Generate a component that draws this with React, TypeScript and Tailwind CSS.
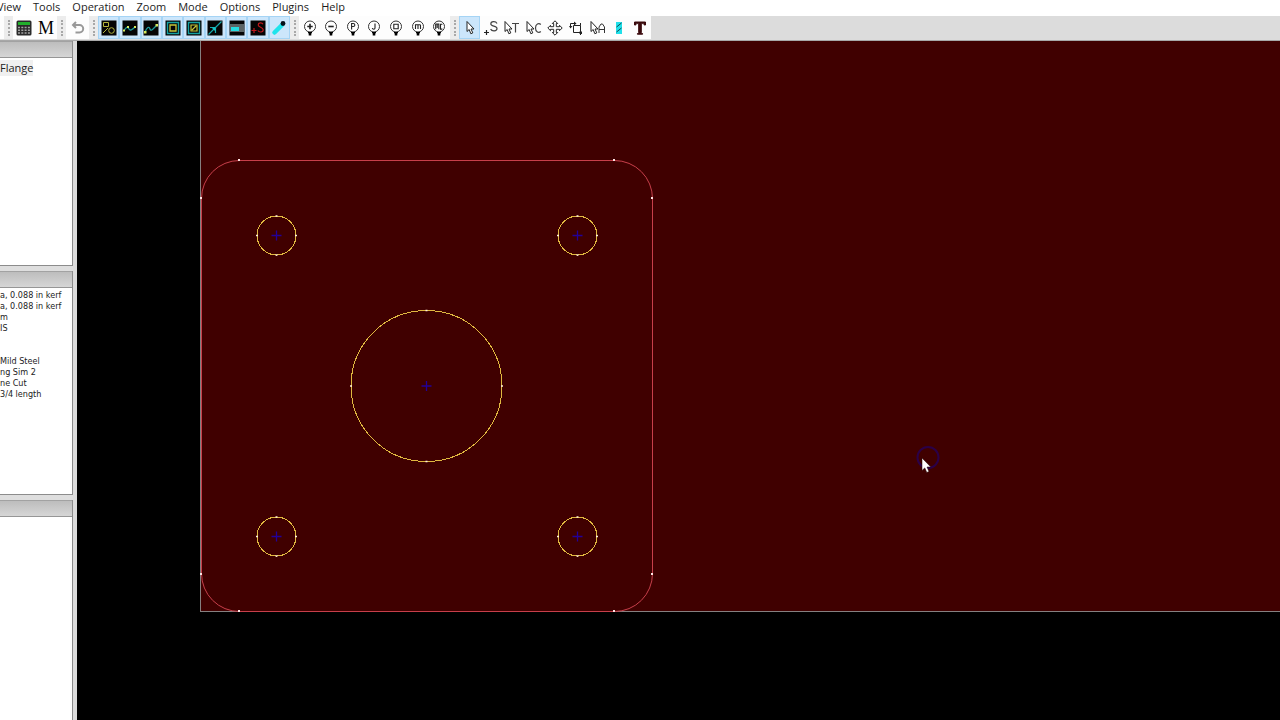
import type { ReactNode } from "react";
import { clsx } from "clsx";

interface Tool {
  label: string;
  icon: ReactNode;
  active?: boolean;
}

const menus = [
  "View",
  "Tools",
  "Operation",
  "Zoom",
  "Mode",
  "Options",
  "Plugins",
  "Help",
];

const settings = [
  "a, 0.088 in kerf",
  "a, 0.088 in kerf",
  "m",
  "IS",
  "",
  "",
  "Mild Steel",
  "ng Sim 2",
  "ne Cut",
  "3/4 length",
];

const holes = [
  { x: 199.5, y: 194.5, r: 19.5 },
  { x: 500.5, y: 194.5, r: 19.5 },
  { x: 349.5, y: 345, r: 75.5 },
  { x: 199.5, y: 495.5, r: 19.5 },
  { x: 500.5, y: 495.5, r: 19.5 },
];

const corners = [
  [162, 119],
  [537, 119],
  [124, 157],
  [575, 157],
  [124, 533],
  [575, 533],
  [162, 570],
  [537, 570],
];

function Icon({ children }: { children: ReactNode }) {
  return (
    <svg width="16" height="16" viewBox="0 0 16 16" fill="none" aria-hidden="true">
      {children}
    </svg>
  );
}

function DarkIcon({ children }: { children: ReactNode }) {
  return (
    <Icon>
      <rect x="0.5" y="0.5" width="15" height="15" fill="#050505" />
      {children}
    </Icon>
  );
}

function ZoomIcon({ children }: { children: ReactNode }) {
  return (
    <Icon>
      <circle cx="8" cy="6.5" r="5.5" fill="#fff" stroke="#333" />
      <path d="M6 12h4v1.2H9.3v2.3H6.7v-2.3H6z" fill="#000" />
      <g stroke="#222" strokeWidth="1.1">
        {children}
      </g>
    </Icon>
  );
}

const arrow = "M1 1.5v10l2.2-2 1.6 4.2 2-.8L5 9h3z";

const fileTools: Tool[] = [
  {
    label: "Calculator",
    icon: (
      <Icon>
        <rect x="0.5" y="0.5" width="15" height="15" rx="1.5" fill="#2a2a2a" />
        <rect x="2" y="2" width="12" height="3" fill="#22b02c" />
        <path
          d="M2 7.5h12M2 10.2h12M2 12.9h12"
          stroke="#a3a3a3"
          strokeWidth="1.5"
          strokeDasharray="2 1.3"
        />
      </Icon>
    ),
  },
  {
    label: "Machine",
    icon: (
      <span className="font-['Liberation_Serif',serif] text-[18px] leading-4 text-black">
        M
      </span>
    ),
  },
];

const undoTools: Tool[] = [
  {
    label: "Undo",
    icon: (
      <Icon>
        <path
          d="M3 5h6.5a3.7 3.7 0 0 1 0 7.400H5.500M6 2 3 5l3 3"
          stroke="#999"
          strokeWidth="2"
        />
      </Icon>
    ),
  },
];

const viewTools: Tool[] = [
  {
    label: "Show shapes",
    icon: (
      <DarkIcon>
        <path d="M2.5 2.5h5v4h-5zM2 13l5-5" stroke="#b5b53c" />
        <circle cx="10.5" cy="10.5" r="2.8" stroke="#b5b53c" />
      </DarkIcon>
    ),
  },
  {
    label: "Show path",
    icon: (
      <DarkIcon>
        <path d="M2 11c2-5 4-4 5-2s3 1 6-2" stroke="#1d9c9c" strokeWidth="1.3" />
        <path d="M1 9.5h2v2H1zM5 6h2v2H5zM12 6h2v2h-2z" fill="#d8e85c" />
      </DarkIcon>
    ),
  },
  {
    label: "Show ends",
    icon: (
      <DarkIcon>
        <path d="M2 12c2-5 4-6 5-3s3 0 7-4" stroke="#1d9c9c" strokeWidth="1.3" />
        <path d="M1 11h2.5v2.5H1zM12.5 4H15v2.5h-2.5z" fill="#d8e85c" />
      </DarkIcon>
    ),
  },
  {
    label: "Show offset",
    icon: (
      <DarkIcon>
        <path d="M2.500 2.500h11v11h-11z" stroke="#14a0a0" strokeWidth="1.4" />
        <path d="M5 5h6v6H5z" stroke="#c6c63a" strokeWidth="1.3" />
      </DarkIcon>
    ),
  },
  {
    label: "Show lead",
    icon: (
      <DarkIcon>
        <path d="M2.5 2.5h11v11h-11z" stroke="#14a0a0" strokeWidth="1.4" />
        <path d="M5 5h6v6H5zM6 10l4-4" stroke="#c6c63a" strokeWidth="1.2" />
      </DarkIcon>
    ),
  },
  {
    label: "Show direction",
    icon: (
      <DarkIcon>
        <path d="m1.5 14.500 13-13M3 7.500h5.500V13" stroke="#16a9ac" strokeWidth="1.2" />
        <path d="M4.500 7.500h4v4z" fill="#16c4c8" />
      </DarkIcon>
    ),
  },
  {
    label: "Show sheet",
    icon: (
      <DarkIcon>
        <path d="M1 4h14v8H1z" fill="#5c6464" />
        <path d="M2 7h8v4H2z" fill="#24dce0" />
      </DarkIcon>
    ),
  },
  {
    label: "Show start",
    icon: (
      <DarkIcon>
        <path d="M1.5 10.5h5M4 8v5" stroke="#c3181c" strokeWidth="1.2" />
        <path
          d="M13 4.2C12 2.3 8.2 2.4 8.2 5c0 2.6 5 1.9 5 4.8 0 2.8-4.2 2.8-5.3.7"
          stroke="#c3181c"
          strokeWidth="1.2"
        />
      </DarkIcon>
    ),
  },
  {
    label: "Show torch",
    icon: (
      <Icon>
        <path d="m3.500 12.500 7.500-7.500" stroke="#1fe4ec" strokeWidth="4.500" strokeLinecap="round" />
        <circle cx="12" cy="3.5" r="2.4" fill="#061018" />
      </Icon>
    ),
  },
].map((tool) => ({ ...tool, active: true }));

const zoomTools: Tool[] = [
  {
    label: "Zoom in",
    icon: (
      <ZoomIcon>
        <path d="M5.3 6.5h5.4M8 3.8v5.4" strokeWidth="1.6" />
      </ZoomIcon>
    ),
  },
  {
    label: "Zoom out",
    icon: (
      <ZoomIcon>
        <path d="M5.3 6.5h5.4" strokeWidth="1.6" />
      </ZoomIcon>
    ),
  },
  {
    label: "Zoom part",
    icon: (
      <ZoomIcon>
        <path d="M6.6 9.5v-6h1.6c2.2 0 2.2 3 0 3H6.6" />
      </ZoomIcon>
    ),
  },
  {
    label: "Zoom job",
    icon: (
      <ZoomIcon>
        <path d="M9 3.5V8c0 1.6-2.4 1.7-2.7 0" />
      </ZoomIcon>
    ),
  },
  {
    label: "Zoom window",
    icon: (
      <ZoomIcon>
        <path d="M5.8 4.3h4.4v4.4H5.8z" />
      </ZoomIcon>
    ),
  },
  {
    label: "Zoom material",
    icon: (
      <ZoomIcon>
        <path d="M5.5 9V4.8h4.2c.6 0 .8.3.8.8V9M8 4.8V9" />
      </ZoomIcon>
    ),
  },
  {
    label: "Zoom machine",
    icon: (
      <ZoomIcon>
        <path d="M4.7 9.2V4h3.1v5.2M6.2 4v4M11.4 4.2H9.5v4.9h1.9" />
      </ZoomIcon>
    ),
  },
];

const modeTools: Tool[] = [
  {
    label: "Select",
    active: true,
    icon: (
      <Icon>
        <path d={arrow} transform="translate(4 0)" fill="#fff" stroke="#222" />
      </Icon>
    ),
  },
  {
    label: "Start point",
    icon: (
      <Icon>
        <path d="M1 12.5h5M3.5 10v5" stroke="#222" strokeWidth="1.2" />
        <path
          d="M14 3.5C12.7.9 7.8 1.1 7.8 4c0 2.8 6.2 1.6 6.2 4.6 0 3-5.3 3-6.4.5"
          stroke="#444"
          strokeWidth="1.2"
        />
      </Icon>
    ),
  },
  {
    label: "Edit tool path",
    icon: (
      <Icon>
        <path d={arrow} fill="#fff" stroke="#222" />
        <path d="M8 3.5h7M11.5 3.5v9" stroke="#444" strokeWidth="1.2" />
      </Icon>
    ),
  },
  {
    label: "Edit contour",
    icon: (
      <Icon>
        <path d={arrow} fill="#fff" stroke="#222" />
        <path
          d="M14.8 4.5c-2-2-5.3-.7-5.3 3.5s3.3 5.5 5.3 3.5"
          stroke="#444"
          strokeWidth="1.2"
        />
      </Icon>
    ),
  },
  {
    label: "Move",
    icon: (
      <Icon>
        <path
          d="M8 .8 5.300 3.500h1.400v3.200H3.500V5.300L.8 8l2.700 2.700V9.300h3.200v3.200H5.300L8 15.200l2.700-2.700H9.300V9.300h3.200v1.400L15.200 8l-2.700-2.700v1.400H9.300V3.500h1.400z"
          fill="#fff"
          stroke="#222"
        />
      </Icon>
    ),
  },
  {
    label: "Rotate",
    icon: (
      <Icon>
        <path
          d="M5.5 5.5h7v7h-7zM2.5 7.5v-4h4M12.5 12.5V15M12.5 5.5V3"
          stroke="#222"
        />
        <path
          d="M1 6l1.5 2.500L4.500 6zM6 1.500l2.500 2-2.500 2zM11.500 11.500H14V14h-2.500z"
          fill="#222"
        />
      </Icon>
    ),
  },
  {
    label: "Edit attributes",
    icon: (
      <Icon>
        <path d={arrow} fill="#fff" stroke="#222" />
        <path d="M9 13V7l2-3h1.5l2 3v6M9 9.5h5.5" stroke="#333" />
      </Icon>
    ),
  },
  {
    label: "Add tabs",
    icon: (
      <Icon>
        <path d="M5 2h6v12H5z" fill="#1fe0ea" />
        <path d="M5.5 7l5-4M5.5 12l5-4" stroke="#15494e" />
      </Icon>
    ),
  },
  {
    label: "Text",
    icon: (
      <Icon>
        <path
          d="M2.500 2h11v3h-1.300c0-1-.5-1.400-1.500-1.400H9.300v9c0 .7.4 1 1.300 1v.6H5.400v-.6c.9 0 1.300-.3 1.300-1v-9H5.300c-1 0-1.500.4-1.500 1.400H2.500z"
          fill="#3a0a0d"
          stroke="#3a0a0d"
        />
      </Icon>
    ),
  },
];

function ToolGroup({
  tools,
  className,
}: {
  tools: Tool[];
  className: string;
}) {
  return (
    <div role="group" className="flex">
      <div className="flex w-[9px] items-center justify-center bg-[#ececec]">
        <div className="h-4 border-l-2 border-dotted border-[#a8a8a8]" />
      </div>
      <div className={clsx("grid auto-cols-fr grid-flow-col bg-[#fdfdfd]", className)}>
        {tools.map((tool) => (
          <button
            key={tool.label}
            type="button"
            aria-label={tool.label}
            aria-pressed={tool.active}
            className={clsx(
              "flex items-center justify-center",
              tool.active && "border border-[#a5d4f5] bg-[#cce6fb]",
            )}
          >
            {tool.icon}
          </button>
        ))}
      </div>
    </div>
  );
}

function PanelHeader() {
  return (
    <div className="h-[17px] shrink-0 border-y border-t-[#a2a2a2] border-b-[#969696] bg-linear-to-b from-[#bdbdbd] to-[#d6d6d6]" />
  );
}

function Sidebar() {
  return (
    <aside className="flex w-[77px] shrink-0 flex-col border-r-4 border-[#dcdcdc] bg-[#dedede]">
      <section className="flex h-[225px] flex-col border-r border-b border-[#8c8c8c] bg-white">
        <PanelHeader />
        <p className="mt-0.5 self-start bg-[#f0f0f0] text-[11px] leading-4 text-[#222]">
          Flange
        </p>
      </section>
      <section className="mt-[5px] flex h-56 flex-col border-r border-b border-[#8c8c8c] bg-white">
        <PanelHeader />
        <ul className="pt-0.5 font-['DejaVu_Sans_Condensed','DejaVu_Sans',sans-serif] text-[9px] leading-[11px] text-[#222]">
          {settings.map((line, i) => (
            <li key={i} className="h-[11px] whitespace-nowrap">
              {line}
            </li>
          ))}
        </ul>
      </section>
      <section className="mt-[5px] flex flex-1 flex-col border-r border-[#8c8c8c] bg-white">
        <PanelHeader />
      </section>
    </aside>
  );
}

function Drawing() {
  return (
    <main className="relative flex-1 overflow-hidden bg-black">
      <svg
        className="absolute inset-0 h-full w-full"
        fill="none"
        role="img"
        aria-label="Flange drawing"
      >
        <rect x="123.5" y="-1" width="100%" height="571.5" fill="#400000" stroke="#858080" />
        <rect
          x="124.5"
          y="119.5"
          width="451"
          height="451"
          rx="38"
          stroke="#c73f4a"
        />
        {corners.map(([x, y]) => (
          <rect key={`${x}-${y}`} x={x - 1} y={y - 1} width="2" height="2" fill="#ffe4e4" />
        ))}
        {holes.map(({ x, y, r }) => (
          <g key={`${x}-${y}`}>
            <circle
              cx={x}
              cy={y}
              r={r}
              stroke="#e0b840"
              shapeRendering="crispEdges"
            />
            <path
              d={`M${x - 5} ${y}h10M${x} ${y - 5}v10`}
              stroke="#220099"
              strokeWidth="1.3"
            />
            <path
              d={`M${x - 1} ${y - r}h2M${x - 1} ${y + r}h2M${x - r - 1} ${y}h2M${x + r - 1} ${y}h2`}
              stroke="#fff0d8"
              strokeWidth="1.5"
            />
          </g>
        ))}
        <circle cx="851" cy="416.5" r="10.5" stroke="#2b0048" strokeWidth="2" />
        <path
          d="M845 417v12.5l2.8-2.6 2 4.6 2.2-1-2-4.5h3.8z"
          fill="#fff"
          stroke="#200"
          strokeWidth="0.5"
        />
      </svg>
    </main>
  );
}

export default function App() {
  return (
    <div className="flex min-h-screen flex-col overflow-hidden bg-[#dcdcdc] font-['Open_Sans','Noto_Sans',sans-serif]">
      <nav className="-ml-[3px] flex h-4 gap-3 bg-white text-[11px] leading-[14px] text-[#1c1c1c]">
        {menus.map((menu) => (
          <button key={menu} type="button" className="pb-0.5">
            {menu}
          </button>
        ))}
      </nav>
      <div className="flex h-[25px] border-b border-b-[#a8a8a8] pb-px">
        <div className="w-1 bg-[#fdfdfd]" />
        <ToolGroup tools={fileTools} className="w-[44px]" />
        <ToolGroup tools={undoTools} className="w-[23px]" />
        <ToolGroup tools={viewTools} className="w-[192px]" />
        <ToolGroup tools={zoomTools} className="w-[151px]" />
        <ToolGroup tools={modeTools} className="w-[192px]" />
      </div>
      <div className="flex flex-1">
        <Sidebar />
        <Drawing />
      </div>
    </div>
  );
}
